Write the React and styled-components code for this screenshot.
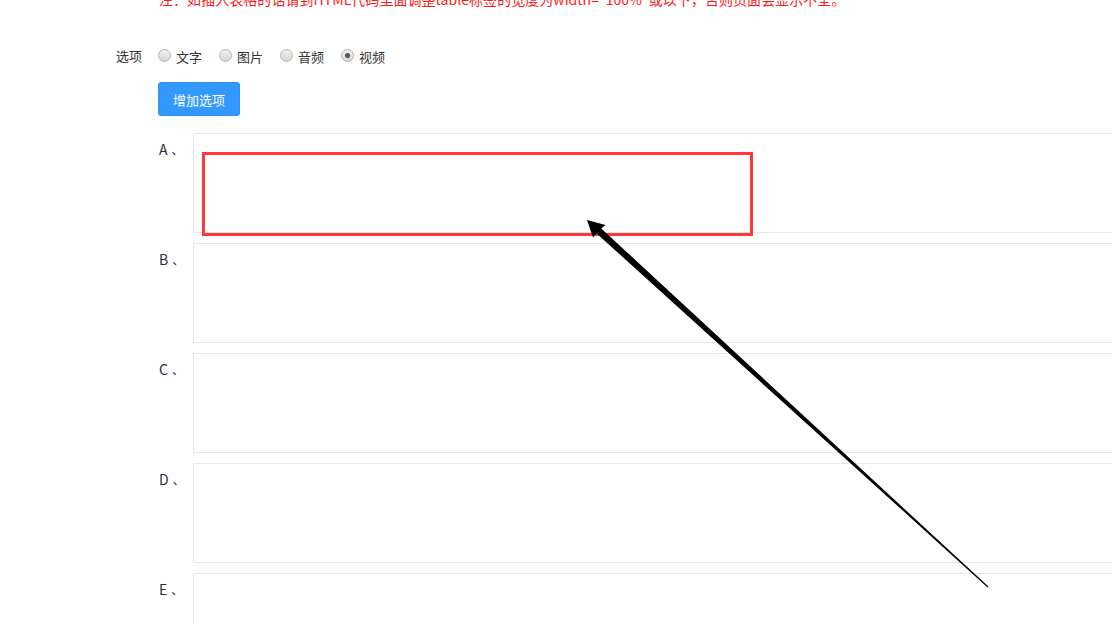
import React from 'react';
import styled, { createGlobalStyle } from 'styled-components';

const Global = createGlobalStyle`
  html, body {
    margin: 0;
    padding: 0;
    background: #fff;
    overflow: hidden;
  }
  body {
    font-family: "Microsoft YaHei", "Noto Sans CJK SC", "Liberation Sans", sans-serif;
    color: #333;
  }
`;

const Page = styled.div`
  position: relative;
  width: 1112px;
  height: 624px;
  overflow: hidden;
  padding-left: 116px;
  box-sizing: border-box;
`;

const Note = styled.div`
  margin-top: -11px;
  padding-left: 43px;
  font-size: 14px;
  line-height: 20px;
  color: #ff1a1a;
  white-space: nowrap;
  letter-spacing: 0.05px;
`;

const OptionRow = styled.div`
  display: flex;
  align-items: center;
  margin-top: 36px;
  height: 22px;
  font-size: 13px;
`;

const RowLabel = styled.div`
  width: 42px;
  font-size: 13px;
  color: #333;
  margin-top: -2px;
`;

const RadioItem = styled.label`
  display: flex;
  align-items: center;
  margin-right: 17px;
  font-size: 13px;
  color: #333;
`;

const RadioDot = styled.span`
  width: 11px;
  height: 11px;
  border-radius: 50%;
  border: 1px solid #b5b5b5;
  background: linear-gradient(#f2f2f2, #d6d6d6);
  margin-right: 5px;
  display: inline-flex;
  align-items: center;
  justify-content: center;
  margin-top: -1px;
  &::after {
    content: '';
    width: 5px;
    height: 5px;
    border-radius: 50%;
    background: ${(p) => (p.checked ? '#555' : 'transparent')};
  }
`;

const AddButton = styled.button`
  display: block;
  margin: 15px 0 0 42px;
  width: 82px;
  height: 34px;
  border: 1px solid #2f8ff0;
  border-radius: 3px;
  background: #3399ff;
  color: #fff;
  font-family: inherit;
  font-size: 13px;
  padding: 0;
`;

const ItemList = styled.div`
  display: flex;
  flex-direction: column;
  gap: 10px;
  margin-top: 17px;
`;

const Item = styled.div`
  display: flex;
  position: relative;
`;

const ItemLabel = styled.div`
  flex-shrink: 0;
  width: 34px;
  padding-left: 43px;
  padding-top: 6px;
  font-size: 14px;
  color: #2b2b40;
  box-sizing: content-box;
  span {
    font-size: 12px;
    margin-left: 4px;
  }
`;

const Editor = styled.div`
  width: 1000px;
  flex-shrink: 0;
  height: 100px;
  border: 1px solid #e6e6e6;
  box-sizing: border-box;
  position: relative;
`;

const Highlight = styled.div`
  position: absolute;
  left: 8px;
  top: 18px;
  width: 551px;
  height: 84px;
  border: 3px solid #ff3838;
  box-sizing: border-box;
`;

const ArrowLayer = styled.svg`
  position: absolute;
  left: 0;
  top: 0;
  pointer-events: none;
`;

const options = [
  { text: '文字' },
  { text: '图片' },
  { text: '音频' },
  { text: '视频', checked: true },
];

const items = ['A', 'B', 'C', 'D', 'E'];

export default function App() {
  return (
    <>
      <Global />
      <Page>
        <Note>注：如插入表格的话请到HTML代码里面调整table标签的宽度为width="100%"或以下，否则页面会显示不全。</Note>
        <OptionRow>
          <RowLabel>选项</RowLabel>
          {options.map((o) => (
            <RadioItem key={o.text}>
              <RadioDot checked={o.checked} />
              {o.text}
            </RadioItem>
          ))}
        </OptionRow>
        <AddButton>增加选项</AddButton>
        <ItemList>
          {items.map((l, i) => (
            <Item key={l}>
              <ItemLabel>
                {l}<span>、</span>
              </ItemLabel>
              <Editor>{i === 0 && <Highlight />}</Editor>
            </Item>
          ))}
        </ItemList>
        <ArrowLayer width="1112" height="624" viewBox="0 0 1112 624">
          <polygon
            points="587,220 605.5,225 601.2,228.4 988.4,586.6 987.6,587.4 596.6,233.4 593,237.5"
            fill="#000"
          />
        </ArrowLayer>
      </Page>
    </>
  );
}
